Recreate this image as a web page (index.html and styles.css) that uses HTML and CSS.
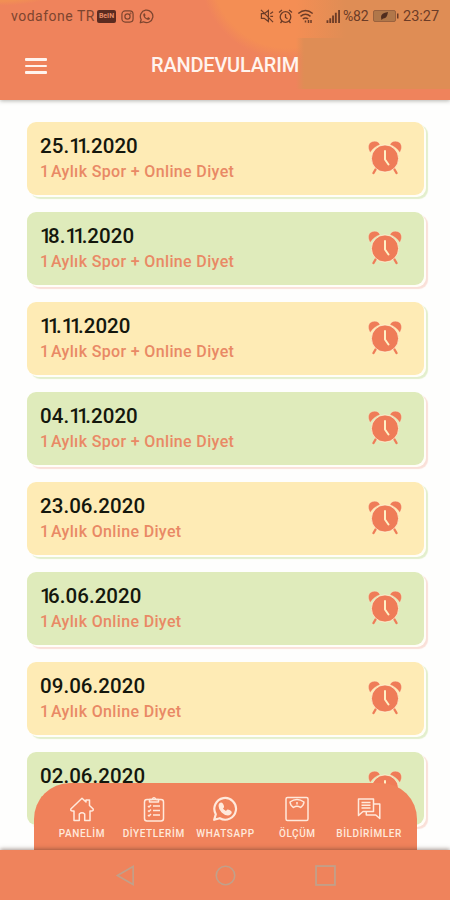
FILE: index.html
```html
<!DOCTYPE html>
<html lang="tr">
<head>
<meta charset="utf-8">
<title>Randevularım</title>
<link rel="stylesheet" href="styles.css">
</head>
<body>
<svg class="sprite" aria-hidden="true">
  <symbol id="clock" viewBox="0 0 34 36">
    <path d="M9 27 5.500 33M25 27l3.500 6" stroke="currentColor" stroke-width="2.400" stroke-linecap="round"/>
    <path d="M2.300 12.500C-.8 8-.2 1.500 6.500 1.200c3-.1 4.700 1.500 5.500 3.500C8 6.200 4.700 8.500 2.300 12.500zM31.700 12.500C34.800 8 34.200 1.500 27.500 1.200c-3-.1-4.700 1.500-5.500 3.500 4 1.500 7.300 3.800 9.700 7.800z" fill="currentColor" stroke="#fff5d5" stroke-width=".3"/>
    <circle cx="17" cy="18.500" r="13.600" fill="currentColor" stroke="#fff5d5" stroke-width=".8"/>
    <path d="M17 11V19.500l3.500 5" fill="none" stroke="#fff0c5" stroke-width="2" stroke-linecap="round" stroke-linejoin="round"/>
  </symbol>
  <symbol id="whatsapp" viewBox="0 0 24 24">
    <path d="M2 22l1.500-5.200A10 10 0 1 1 7.200 20.500z" fill="none" stroke="currentColor" stroke-width="2" stroke-linejoin="round"/>
    <path d="M8.600 6.700c-.7 0-1.800 1-1.800 2.500 0 3.800 4.400 8 7.900 8 1.400 0 2.800-1 2.800-2.100 0-.8-2.300-1.800-2.900-1.800-.7 0-1.100 1.300-1.700 1.300-.9 0-3.500-2.300-3.500-3.100 0-.5 1-1 1-1.600 0-.5-.9-3.200-1.800-3.200z" fill="currentColor"/>
  </symbol>
</svg>
<header class="header">
  <div class="status">
    <span class="carrier">vodafone TR</span>
    <span class="badge">BeIN</span>
    <svg class="st-insta" viewBox="0 0 14 14" fill="none" stroke="currentColor" stroke-width="1.300"><rect x="1" y="1" width="12" height="12" rx="3.500"/><circle cx="7" cy="7" r="2.800"/><circle cx="10.300" cy="3.700" r=".3"/></svg>
    <svg class="st-wa"><use href="#whatsapp"/></svg>
    <span class="status-right">
      <svg class="st-mute" viewBox="0 0 15 15" fill="none" stroke="currentColor" stroke-width="1.300"><path d="M1.500 5h3L9 1.500v12L4.500 10h-3zM1 1l13 13M11 5l3-2M11 8h3"/></svg>
      <svg class="st-alarm" viewBox="0 0 15 15" fill="none" stroke="currentColor" stroke-width="1.300"><circle cx="7.500" cy="8" r="5.300"/><path d="M1 3.500 4 1M14 3.500 11 1M7.500 5v3.500l2 1.200M4 12l-1.500 2M11 12l1.500 2"/></svg>
      <svg class="st-wifi" viewBox="0 0 16 15" fill="none" stroke="currentColor" stroke-width="1.500"><path d="M.8 4.500Q8-1.500 15.200 4.500M3 7.300q5-4 10 0M5.300 10q2.700-2.200 5.400 0"/><path d="M8 11.500v2M11 11v3M13.500 11v3"/></svg>
      <svg class="st-signal" viewBox="0 0 15 14" fill="currentColor"><path d="M0 11h2v3H0zM3 9h2v5H3zM6 6h2v8H6zM9 3h2v11H9zM12.500 0h2v14h-2z"/></svg>
      <span class="percent">%82</span>
      <svg class="st-battery" viewBox="0 0 26 12"><rect x=".5" y=".5" width="22" height="11" rx="1.500" fill="#b0774a" stroke="#9a623f"/><path d="M24 3.500h1.500v5H24z" fill="#6c3c27"/><path d="M8 7q0-4 7-5-1 7-5 6.500L8.500 10z" fill="#4f2c1e"/></svg>
      <span class="time">23:27</span>
    </span>
  </div>
  <div class="titlebar">
    <div class="menu"><i></i><i></i><i></i></div>
    <h1>RANDEVULARIM</h1>
  </div>
</header>
<main class="list">
  <article class="card"><div><h2>25.<b>11</b>.2020</h2><p><b>1</b> Aylık Spor + Online Diyet</p></div><svg class="clock"><use href="#clock"/></svg></article>
  <article class="card green"><div><h2><b>1</b>8.<b>11</b>.2020</h2><p><b>1</b> Aylık Spor + Online Diyet</p></div><svg class="clock"><use href="#clock"/></svg></article>
  <article class="card"><div><h2><b>11</b>.<b>11</b>.2020</h2><p><b>1</b> Aylık Spor + Online Diyet</p></div><svg class="clock"><use href="#clock"/></svg></article>
  <article class="card green"><div><h2>04.<b>11</b>.2020</h2><p><b>1</b> Aylık Spor + Online Diyet</p></div><svg class="clock"><use href="#clock"/></svg></article>
  <article class="card"><div><h2>23.06.2020</h2><p><b>1</b> Aylık Online Diyet</p></div><svg class="clock"><use href="#clock"/></svg></article>
  <article class="card green"><div><h2><b>1</b>6.06.2020</h2><p><b>1</b> Aylık Online Diyet</p></div><svg class="clock"><use href="#clock"/></svg></article>
  <article class="card"><div><h2>09.06.2020</h2><p><b>1</b> Aylık Online Diyet</p></div><svg class="clock"><use href="#clock"/></svg></article>
  <article class="card green"><div><h2>02.06.2020</h2><p><b>1</b> Aylık Online Diyet</p></div><svg class="clock"><use href="#clock"/></svg></article>
</main>
<footer class="bottom">
  <nav class="tabs">
    <a><svg viewBox="0 0 26 26"><path d="M1.800 13 13 2.300l4 3.700V4h3.500v5.500L24.200 13q.3 2-1.700 2H21v9.500h-5.300V18q-2.700-2.500-5.400 0v6.500H5V15H3.500q-2 0-1.700-2z"/></svg><span>PANELİM</span></a>
    <a><svg viewBox="0 0 26 26"><rect x="3.500" y="3.500" width="19" height="21.500" rx="2.500"/><path d="M8.500 6V3.500H11q2-3.500 4 0h2.500V6zM7 10l1 1 2-2M12 10h7M7 14.500l1 1 2-2M12 14.500h7M7 19l1 1 2-2M12 19h7"/></svg><span>DİYETLERİM</span></a>
    <a><svg><use href="#whatsapp"/></svg><span>WHATSAPP</span></a>
    <a><svg viewBox="0 0 26 26"><rect x="2" y="1.500" width="22" height="23" rx="1.500"/><path d="M6 6Q13 .8 20 6q-.3 3.500-3.500 5.500-3.500-2.500-7 0Q6.300 9.500 6 6zM13 8.500V6"/></svg><span>ÖLÇÜM</span></a>
    <a><svg viewBox="0 0 26 26"><path d="M2.500 3h15v12.500H7l-4.500 4zM5.500 6.500h9M5.500 9.300h9M5.500 12h9M17.500 8h6.300v14.500l-4-3.500h-9.500v-3.500"/></svg><span>BİLDİRİMLER</span></a>
  </nav>
  <div class="system">
    <svg viewBox="0 0 20 22"><path d="M18 1.500v19L1.500 11z"/></svg>
    <svg viewBox="0 0 22 22"><circle cx="11" cy="11" r="9.700"/></svg>
    <svg viewBox="0 0 20 20"><rect x="1" y="1" width="18" height="18"/></svg>
  </div>
</footer>
</body>
</html>
```
FILE: styles.css
```css
* { box-sizing: border-box; margin: 0; padding: 0; }
body {
  width: 450px;
  height: 900px;
  overflow: hidden;
  background: #fefefd;
  font-family: Roboto, "Liberation Sans", sans-serif;
  display: flex;
  flex-direction: column;
}
svg { display: block; flex: none; }
.sprite { position: absolute; width: 0; height: 0; }

.header {
  flex: none;
  height: 100px;
  background:
    linear-gradient(90deg, transparent, #df8d55 8px) 296px 38px / 154px 51px no-repeat,
    linear-gradient(90deg, transparent 0, #df8d55 50px) 296px 0 / 154px 38px no-repeat,
    radial-gradient(circle at 288px -28px, #f48e54 0 76px, transparent 88px),
    linear-gradient(90deg, transparent, #f48e54 12px) 288px 0 / 162px 40px no-repeat,
    radial-gradient(ellipse at 0 -8px, #f18f54 0 38px, transparent 56px),
    #ef835c;
  box-shadow: 0 1px 4px rgba(70, 70, 60, .4);
}
.status {
  height: 32px;
  padding: 0 10px 0 11px;
  display: flex;
  align-items: center;
  color: #7d452f;
  font-size: 14px;
}
.carrier { width: 86px; letter-spacing: .5px; white-space: nowrap; }
.badge {
  width: 19px;
  height: 13px;
  border-radius: 2px;
  background: #5b2b20;
  color: #e58b68;
  font-size: 7px;
  font-weight: 700;
  line-height: 13px;
  text-align: center;
}
.st-insta { width: 13px; height: 13px; margin-left: 5px; }
.st-wa { width: 15px; height: 15px; margin-left: 5px; }
.status-right { display: flex; align-items: center; margin-left: auto; color: #6c3c27; }
.st-mute { width: 14px; height: 14px; }
.st-alarm { width: 15px; height: 15px; margin-left: 4px; }
.st-wifi { width: 17px; height: 15px; margin-left: 4px; }
.st-signal { width: 15px; height: 13px; margin-left: 12px; }
.percent { width: 27px; margin-left: 2px; font-size: 14px; letter-spacing: -.2px; }
.st-battery { width: 26px; height: 12px; margin-left: 3px; }
.time { width: 37px; margin-left: 4px; font-size: 14.500px; }

.titlebar { position: relative; height: 66px; display: flex; align-items: center; justify-content: center; }
.menu { position: absolute; left: 25px; top: 26px; width: 22px; display: grid; gap: 4px; }
.menu i { height: 2.500px; background: #fff4ee; border-radius: 1px; }
h1 { color: #fff4ee; font-size: 20px; line-height: 24px; font-weight: 500; letter-spacing: -.2px; }

.list { flex: none; padding: 22px 26px 0 27px; display: grid; gap: 17px; }
.card {
  width: 397px;
  height: 73px;
  padding: 0 22px 0 13px;
  border-radius: 9px;
  background: #feebb5;
  box-shadow: 2px 2px 0 #fffef8, 4px 3.500px 1px #e3efcc;
  display: flex;
  justify-content: space-between;
}
.card.green { background: #dfebbb; box-shadow: 2px 2px 0 #fffef8, 4px 3.500px 1px #fae0d8; }
h2 { padding-top: 12px; color: #14170d; font-size: 20.500px; line-height: 25px; font-weight: 500; letter-spacing: .05px; }
h2 b { font-weight: 500; letter-spacing: -3.600px; }
p { margin-top: 3px; color: #e98965; font-size: 16px; line-height: 20px; font-weight: 500; letter-spacing: .35px; white-space: nowrap; }
p b { font-weight: 500; letter-spacing: -2.500px; }
.clock { width: 34px; height: 36px; margin-top: 18px; color: #ef7c58; }

.bottom { position: absolute; left: 0; top: 783px; width: 450px; }
.tabs {
  width: 383px;
  height: 67px;
  margin-left: 34px;
  padding: 13px 12px 0;
  border-radius: 36px 36px 0 0;
  background: #f0825b;
  display: grid;
  grid-template-columns: repeat(5, 1fr);
}
.tabs a { min-width: 0; display: flex; flex-direction: column; align-items: center; color: #ffe9dc; }
.tabs svg { width: 26px; height: 26px; fill: none; stroke: currentColor; stroke-width: 1.500; stroke-linejoin: round; }
.tabs span { margin-top: 5px; font-size: 10px; line-height: 14px; font-weight: 500; letter-spacing: .6px; white-space: nowrap; }
.system {
  position: relative;
  height: 50px;
  padding-top: 1px;
  background: #ef835c;
  box-shadow: 0 -1px 4px rgba(80, 50, 40, .5);
  display: flex;
  justify-content: center;
  align-items: center;
  gap: 79px;
}
.system svg { width: 21px; height: 21px; fill: none; stroke: #c1a08a; stroke-width: 1.700; }
```
